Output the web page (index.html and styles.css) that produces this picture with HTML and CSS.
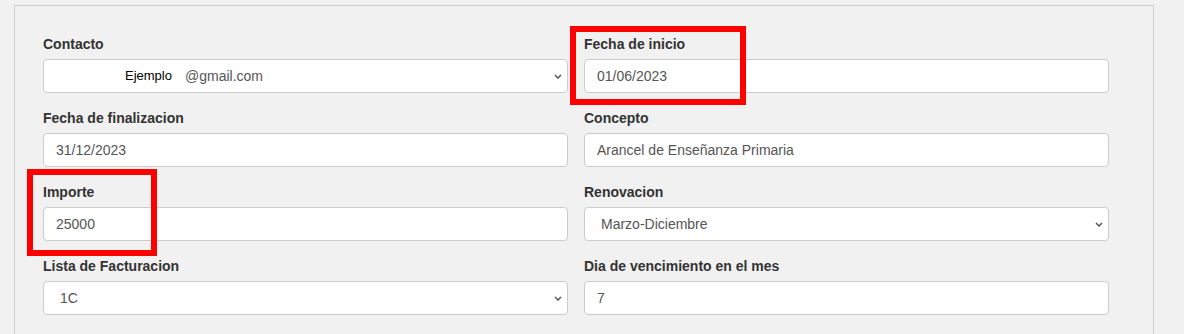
FILE: index.html
```html
<!DOCTYPE html>
<html lang="es">
<head>
  <meta charset="UTF-8">
  <meta name="viewport" content="width=device-width, initial-scale=1.0">
  <title>Contrato</title>
  <link rel="stylesheet" href="styles.css">
</head>
<body>
  <div class="panel">
    <form class="form-grid">
      <div class="field">
        <label for="contacto">Contacto</label>
        <div class="select-wrap">
          <div class="form-control select-fake" id="contacto">
            <span class="name">Ejemplo</span><span class="mail">@gmail.com</span>
          </div>
          <svg class="chevron" width="8" height="5" viewBox="0 0 8 5"><path d="M1 1 L4 4 L7 1" fill="none" stroke="#555" stroke-width="1.5"/></svg>
        </div>
      </div>

      <div class="field marked marked-start">
        <label for="inicio">Fecha de inicio</label>
        <input class="form-control" id="inicio" type="text" value="01/06/2023">
      </div>

      <div class="field">
        <label for="fin">Fecha de finalizacion</label>
        <input class="form-control" id="fin" type="text" value="31/12/2023">
      </div>

      <div class="field">
        <label for="concepto">Concepto</label>
        <input class="form-control" id="concepto" type="text" value="Arancel de Enseñanza Primaria">
      </div>

      <div class="field marked marked-amount">
        <label for="importe">Importe</label>
        <input class="form-control" id="importe" type="text" value="25000">
      </div>

      <div class="field">
        <label for="renovacion">Renovacion</label>
        <div class="select-wrap">
          <select class="form-control select" id="renovacion">
            <option>Marzo-Diciembre</option>
          </select>
          <svg class="chevron" width="8" height="5" viewBox="0 0 8 5"><path d="M1 1 L4 4 L7 1" fill="none" stroke="#555" stroke-width="1.5"/></svg>
        </div>
      </div>

      <div class="field">
        <label for="lista">Lista de Facturacion</label>
        <div class="select-wrap">
          <select class="form-control select" id="lista">
            <option>1C</option>
          </select>
          <svg class="chevron" width="8" height="5" viewBox="0 0 8 5"><path d="M1 1 L4 4 L7 1" fill="none" stroke="#555" stroke-width="1.5"/></svg>
        </div>
      </div>

      <div class="field">
        <label for="vencimiento">Dia de vencimiento en el mes</label>
        <input class="form-control" id="vencimiento" type="text" value="7">
      </div>
    </form>
  </div>
</body>
</html>
```

FILE: styles.css
```css
html, body {
  overflow: hidden;
}
body {
  margin: 0;
  background-color: #f1f1f1;
  font-family: "Liberation Sans", Arial, sans-serif;
  font-size: 14px;
  color: #333;
}
.panel {
  width: 1140px;
  box-sizing: border-box;
  margin: 5px 0 0 14px;
  border: 1px solid #cfcfcf;
  padding: 29px 0 40px 28px;
  background-color: #f1f1f1;
}
.form-grid {
  display: grid;
  grid-template-columns: 525px 525px;
  column-gap: 16px;
  row-gap: 16px;
}
.field {
  display: flex;
  flex-direction: column;
}
label {
  display: block;
  font-weight: bold;
  font-size: 14px;
  line-height: 18px;
  margin-bottom: 6px;
  color: #333;
}
.form-control {
  display: block;
  width: 100%;
  height: 34px;
  box-sizing: border-box;
  padding: 6px 12px;
  font-family: "Liberation Sans", Arial, sans-serif;
  font-size: 14px;
  line-height: 20px;
  color: #555;
  background-color: #fff;
  border: 1px solid #ccc;
  border-radius: 4px;
  outline: none;
}
.select-wrap {
  position: relative;
}
.select {
  appearance: none;
  -webkit-appearance: none;
  padding-left: 16px;
  padding-right: 30px;
}
.select-fake {
  display: flex;
  align-items: center;
  padding-left: 81px;
}
.select-fake .name {
  font-size: 13px;
  color: #000;
  margin-right: 13px;
}
.chevron {
  position: absolute;
  right: 6px;
  top: 15px;
  pointer-events: none;
}
.marked {
  position: relative;
}
.marked::after {
  content: "";
  position: absolute;
  box-sizing: border-box;
  border: 6px solid #ff0000;
}
.marked-start::after {
  left: -14px;
  top: -9px;
  width: 176px;
  height: 79px;
}
.marked-amount::after {
  left: -16px;
  top: -14px;
  width: 130px;
  height: 87px;
}
```
